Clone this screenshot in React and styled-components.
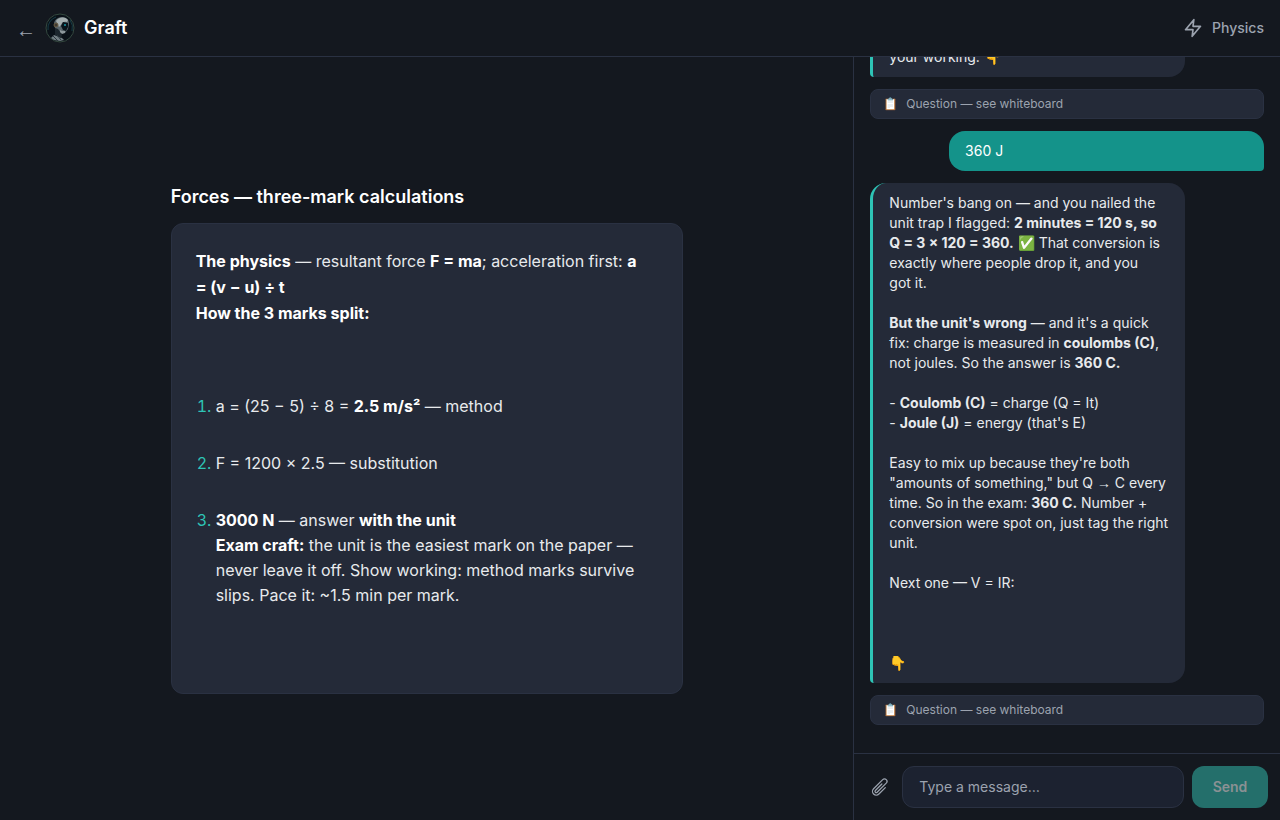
import styled, { createGlobalStyle } from "styled-components";
import { useLayoutEffect, useRef } from "react";

const GlobalStyle = createGlobalStyle`
    * {
        box-sizing: border-box;
    }

    body {
        margin: 0;
        background-color: #14181f;
        color: #e8eaed;
        font-family: Inter, "Liberation Sans", sans-serif;
    }

    button, input {
        font-family: inherit;
    }
`

const Page = styled.div`
    display: flex;
    flex-direction: column;
    height: 100vh;
`

const Header = styled.header`
    display: flex;
    align-items: center;
    justify-content: space-between;
    padding: 12px 16px;
    border-bottom: 1px solid #2a3142;
`

const Brand = styled.div`
    display: flex;
    align-items: center;
    gap: 9px;
`

const BackLink = styled.a`
    padding-top: 4px;
    color: #9ca3af;
    font-family: "Liberation Sans", sans-serif;
    font-size: 20px;
    line-height: 28px;
    text-decoration: none;
`

const Name = styled.h1`
    margin: 0;
    color: #ffffff;
    font-size: 18px;
    font-weight: 600;
    line-height: 28px;
`

const Subject = styled.div`
    display: flex;
    align-items: center;
    gap: 9px;
    color: #9ca3af;
    font-size: 14px;
    font-weight: 500;
    line-height: 20px;
`

const Main = styled.main`
    display: grid;
    grid-template-columns: 2fr 1fr;
    flex: 1;
    min-height: 0;
`

const Whiteboard = styled.section`
    display: flex;
    flex-direction: column;
    align-items: center;
    justify-content: center;
`

const BoardContent = styled.div`
    width: 60%;
`

const BoardTitle = styled.h2`
    margin: 0 0 12px;
    color: #ffffff;
    font-size: 18px;
    font-weight: 600;
    line-height: 28px;
`

const BoardCard = styled.div`
    padding: 24px 24px 85px;
    border: 1px solid #2a3142;
    border-radius: 12px;
    background-color: #242a38;
    font-size: 16px;
    line-height: 26px;

    strong {
        color: #ffffff;
    }

    p {
        margin: 0;
    }
`

const Steps = styled.ol`
    display: flex;
    flex-direction: column;
    gap: 32px;
    margin: 68px 0 0;
    padding-left: 20px;
    line-height: 25px;

    li::marker {
        color: #2ec4b6;
    }
`

const Chat = styled.section`
    display: flex;
    flex-direction: column;
    min-height: 0;
    border-left: 1px solid #2a3142;
`

const Messages = styled.div`
    display: flex;
    flex: 1;
    flex-direction: column;
    gap: 12px;
    min-height: 0;
    padding: 16px 16px 28px;
    overflow-y: auto;
    scrollbar-width: none;
`

const Bubble = styled.div`
    flex-shrink: 0;
    align-self: ${props => props.$own ? "flex-end" : "flex-start"};
    width: 80%;
    padding: 10px 16px;
    border-left: ${props => props.$own ? "none" : "3px solid #2ec4b6"};
    border-radius: ${props => props.$own ? "16px 16px 4px 16px" : "16px 16px 16px 4px"};
    background-color: ${props => props.$own ? "#14938a" : "#242a38"};
    color: ${props => props.$own ? "#ffffff" : "#e8eaed"};
    font-size: 14px;
    line-height: 20px;
    white-space: pre-wrap;
`

const Arrow = styled.span`
    font-family: "Liberation Sans", sans-serif;
`

const QuestionNote = styled.div`
    display: flex;
    flex-shrink: 0;
    gap: 8px;
    padding: 6px 12px;
    border: 1px solid #2a3142;
    border-radius: 8px;
    background-color: #242a38;
    color: #9ca3af;
    font-size: 12px;
    line-height: 16px;
`

const Composer = styled.form`
    display: flex;
    align-items: center;
    gap: 8px;
    padding: 12px;
    border-top: 1px solid #2a3142;
`

const AttachButton = styled.button`
    display: flex;
    align-items: center;
    justify-content: center;
    width: 28px;
    height: 28px;
    padding: 0;
    border: none;
    background: none;
    color: #9ca3af;
    cursor: pointer;
`

const MessageInput = styled.input`
    flex: 1;
    min-width: 0;
    padding: 10px 16px;
    border: 1px solid #2a3142;
    border-radius: 12px;
    background-color: #1c2230;
    color: #e8eaed;
    font-size: 14px;
    line-height: 20px;

    &::placeholder {
        color: #9ca3af;
    }
`

const SendButton = styled.button`
    align-self: stretch;
    min-width: 76px;
    padding: 10px 20px;
    border: none;
    border-radius: 12px;
    background-color: #246f6b;
    color: #8b9194;
    font-size: 14px;
    font-weight: 600;
    line-height: 20px;
`

function Avatar () {
    return (
        <svg width="30" height="30" viewBox="0 0 30 30" role="img" aria-label="Graft">
            <circle cx="15" cy="15" r="14" fill="#0a1118" stroke="#34483f"/>
            <path d="M3 17a12 12 0 0 1 8-13M25 7a13 13 0 0 1 2 11" fill="none" stroke="#163c46"/>
            <path d="M6 25l3-3 3 1 5 2 2 2-4 1-6-1z" fill="#717d82"/>
            <path d="M10 15l4 1 3 6-1 3-6-3z" fill="#1c262d"/>
            <path d="M9 11c0-4 4-7 8-7 4 0 7 2 7 7l-1 5-3 4-4 0-3-4-3-1z" fill="#59656b"/>
            <path d="M11 8c2-4 9-5 12-1l-1 2c-3-1-5 0-6 3l-2 2-2-4z" fill="#a3adaf"/>
            <path d="M18 9l5 1 0 4-2 4-3-1-2-4z" fill="#08121a"/>
            <path d="M15 17l2 1 3 0 0 2-3 1-2-2z" fill="#8d989c"/>
            <circle cx="11" cy="12" r="2" fill="#3f3a31" stroke="#695c43"/>
            <circle cx="20" cy="12" r="1" fill="#1796a6"/>
            <path d="M8 23l5 5M12 22l4 5" stroke="#2c373e"/>
        </svg>
    )
}

function BoltIcon () {
    return (
        <svg width="20" height="20" viewBox="0 0 24 24" fill="none" stroke="currentColor" strokeWidth="2" strokeLinecap="round" strokeLinejoin="round" aria-hidden="true">
            <path d="M13 2 3 14h9l-1 8 10-12h-9l1-8z"/>
        </svg>
    )
}

function ClipIcon () {
    return (
        <svg width="20" height="20" viewBox="0 0 24 24" fill="none" stroke="currentColor" strokeWidth="1.5" strokeLinecap="round" strokeLinejoin="round" aria-hidden="true">
            <path d="m18.375 12.739-7.693 7.693a4.5 4.5 0 0 1-6.364-6.364l10.94-10.94A3 3 0 1 1 19.5 7.372L8.552 18.32m.009-.01-.01.01m5.699-9.941-7.81 7.81a1.5 1.5 0 0 0 2.112 2.13"/>
        </svg>
    )
}

function Question () {
    return (
        <QuestionNote>
            <span>📋</span>
            <span>Question — see whiteboard</span>
        </QuestionNote>
    )
}

function Board () {
    return (
        <Whiteboard>
            <BoardContent>
                <BoardTitle>Forces — three-mark calculations</BoardTitle>
                <BoardCard>
                    <p><strong>The physics</strong> — resultant force <strong>F = ma</strong>; acceleration first: <strong>a =&nbsp;(v − u) ÷ t</strong></p>
                    <p><strong>How the 3 marks split:</strong></p>
                    <Steps>
                        <li>a = (25 − 5) ÷ 8 = <strong>2.5 m/s²</strong> — method</li>
                        <li>F = 1200 × 2.5 — substitution</li>
                        <li>
                            <strong>3000 N</strong> — answer <strong>with the unit</strong><br/>
                            <strong>Exam craft:</strong> the unit is the easiest mark on the paper — never leave it off. Show working: method marks survive slips. Pace it: ~1.5 min per mark.
                        </li>
                    </Steps>
                </BoardCard>
            </BoardContent>
        </Whiteboard>
    )
}

export default function App () {
    const messages = useRef(null);

    useLayoutEffect(() => {
        messages.current.scrollTop = messages.current.scrollHeight;
    })

    return (
        <Page>
            <GlobalStyle/>
            <Header>
                <Brand>
                    <BackLink href="#" aria-label="Back">←</BackLink>
                    <Avatar/>
                    <Name>Graft</Name>
                </Brand>
                <Subject><BoltIcon/>Physics</Subject>
            </Header>
            <Main>
                <Board/>
                <Chat>
                    <Messages ref={messages}>
                        <Bubble>your working. 👇</Bubble>
                        <Question/>
                        <Bubble $own>360 J</Bubble>
                        <Bubble>
                            Number's bang on — and you nailed the unit trap I flagged: <strong>2 minutes = 120 s, so Q = 3 × 120 = 360.</strong> ✅ That conversion is exactly where people drop it, and you got&nbsp;it.{"\n\n"}
                            <strong>But the unit's wrong</strong> — and it's a quick fix: charge is measured in <strong>coulombs (C)</strong>, not joules. So the answer is <strong>360 C.</strong>{"\n\n"}
                            - <strong>Coulomb (C)</strong> = charge (Q = It){"\n"}
                            - <strong>Joule (J)</strong> = energy (that's E){"\n\n"}
                            Easy to mix up because they're both "amounts of something," but Q <Arrow>→</Arrow> C every time. So in the exam: <strong>360 C.</strong> Number + conversion were spot on, just tag the right unit.{"\n\n"}
                            Next one — V = IR:{"\n\n\n\n"}
                            👇
                        </Bubble>
                        <Question/>
                    </Messages>
                    <Composer onSubmit={event => event.preventDefault()}>
                        <AttachButton type="button" aria-label="Attach file"><ClipIcon/></AttachButton>
                        <MessageInput type="text" placeholder="Type a message…" aria-label="Message"/>
                        <SendButton type="submit" disabled>Send</SendButton>
                    </Composer>
                </Chat>
            </Main>
        </Page>
    )
}
